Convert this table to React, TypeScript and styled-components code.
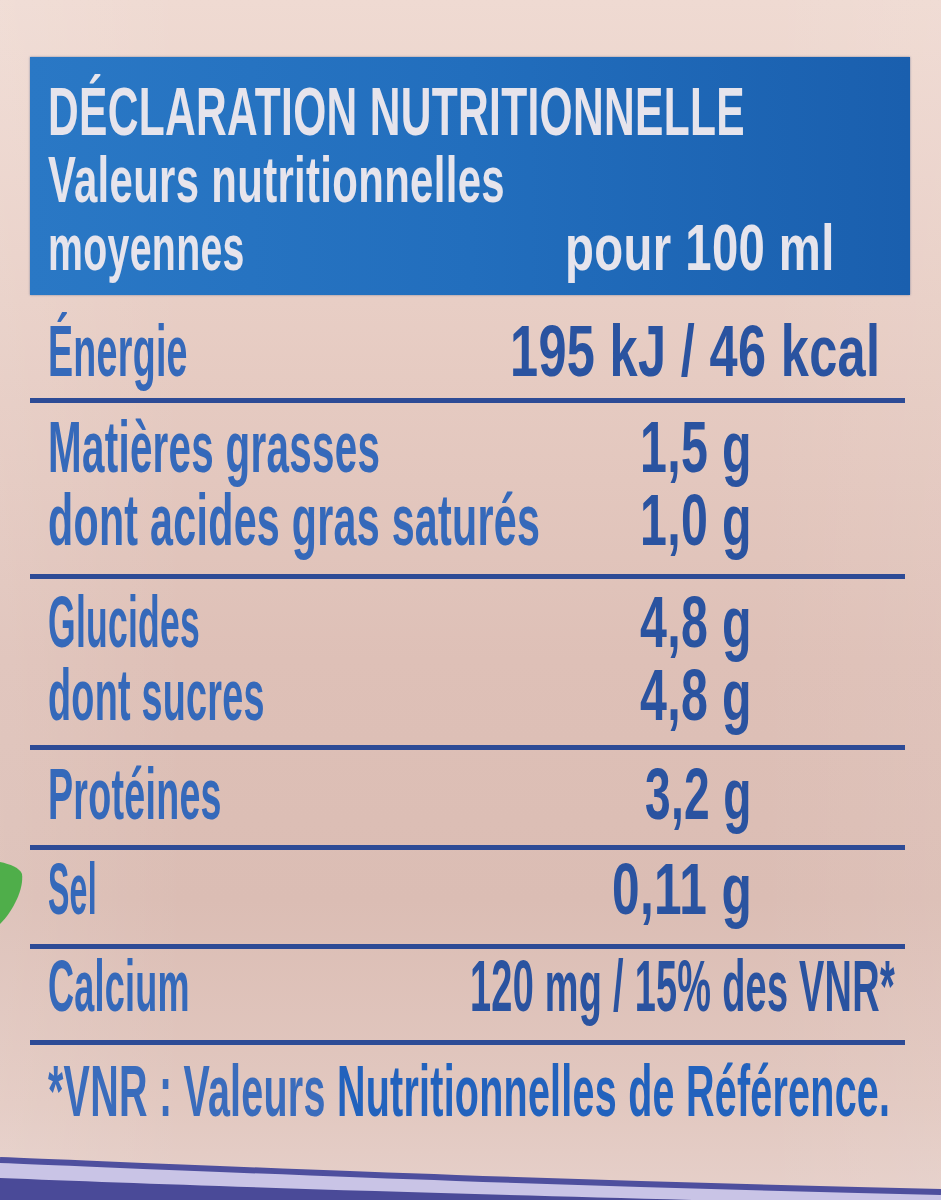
import React, { useLayoutEffect, useRef, useState } from "react";
import styled, { createGlobalStyle } from "styled-components";

const Global = createGlobalStyle`
  html, body { margin: 0; padding: 0; }
  body { font-family: "Liberation Sans", Arial, sans-serif; }
`;

const Page = styled.div`
  position: relative;
  width: 941px;
  height: 1200px;
  overflow: hidden;
  padding-top: 57px;
  box-sizing: border-box;
  background:
    linear-gradient(90deg, rgba(255,255,255,0.10) 0%, rgba(255,255,255,0) 20%, rgba(0,0,0,0) 80%, rgba(255,255,255,0.06) 100%),
    linear-gradient(180deg, #efdad2 0%, #e8cec5 25%, #dec0b7 55%, #dbbdb4 75%, #e2c8c0 92%, #e6d0ca 100%);
  font-family: "Liberation Sans", Arial, sans-serif;
  font-weight: 700;
`;

const Header = styled.div`
  margin: 0 31px 0 30px;
  padding: 19px 75px 13px 18px;
  background: linear-gradient(90deg, #2a78c5 0%, #226ebd 50%, #1a5fae 100%);
  color: #e6e4ec;
  box-shadow: 0 0 2px rgba(20, 50, 110, 0.5);
`;

const HeaderLine = styled.div<{ $size: number; $lh: number }>`
  display: flex;
  justify-content: space-between;
  align-items: baseline;
  font-size: ${(p) => p.$size}px;
  line-height: ${(p) => p.$lh}px;
  white-space: nowrap;
`;

const Table = styled.div`
  margin: 0 36px 0 30px;
`;

const Section = styled.div<{ $pt: number; $pb: number; $last?: boolean }>`
  padding: ${(p) => p.$pt}px 0 ${(p) => p.$pb}px 18px;
  border-bottom: ${(p) => (p.$last ? "none" : "5px solid #2d4b96")};
`;

const Row = styled.div<{ $inset: number }>`
  display: flex;
  justify-content: space-between;
  align-items: baseline;
  padding-right: ${(p) => p.$inset}px;
  font-size: 72px;
  line-height: 73px;
  white-space: nowrap;
`;

const Label = styled.span`
  color: #3569ba;
`;

const Value = styled.span`
  color: #2a53a0;
`;

const FootDim = styled.span`
  color: #3a6cbc;
`;

const FootBright = styled.span`
  color: #2262bd;
`;

const FitBox = styled.span<{ $w: number }>`
  display: inline-block;
  width: ${(p) => p.$w}px;
  white-space: nowrap;
  overflow: visible;
`;

const FitInner = styled.span`
  display: inline-block;
  white-space: nowrap;
  transform-origin: 0 50%;
  letter-spacing: 0.5px;
`;

const Fit: React.FC<{ w: number; children: React.ReactNode }> = ({ w, children }) => {
  const ref = useRef<HTMLSpanElement>(null);
  const [scale, setScale] = useState(0.56);
  useLayoutEffect(() => {
    const measure = () => {
      if (ref.current) {
        const n = ref.current.offsetWidth;
        if (n > 0) setScale(w / n);
      }
    };
    measure();
    if (document.fonts && document.fonts.ready) document.fonts.ready.then(measure);
  }, [w]);
  return (
    <FitBox $w={w}>
      <FitInner ref={ref} style={{ transform: `scaleX(${scale})` }}>
        {children}
      </FitInner>
    </FitBox>
  );
};

const Leaf = styled.svg`
  position: absolute;
  left: 0;
  top: 858px;
  width: 26px;
  height: 70px;
`;

const BottomBand = styled.svg`
  position: absolute;
  left: 0;
  bottom: 0;
  width: 941px;
  height: 50px;
`;

export default function App() {
  return (
    <>
      <Global />
      <Page>
        <Header>
          <HeaderLine $size={68} $lh={70}>
            <Fit w={697}>DÉCLARATION NUTRITIONNELLE</Fit>
          </HeaderLine>
          <HeaderLine $size={64} $lh={68}>
            <Fit w={457}>Valeurs nutritionnelles</Fit>
          </HeaderLine>
          <HeaderLine $size={64} $lh={68}>
            <Fit w={197}>moyennes</Fit>
            <Fit w={270}>pour 100 ml</Fit>
          </HeaderLine>
        </Header>
        <Table>
          <Section $pt={20} $pb={10}>
            <Row $inset={25}>
              <Label><Fit w={140}>Énergie</Fit></Label>
              <Value><Fit w={370}>195 kJ / 46 kcal</Fit></Value>
            </Row>
          </Section>
          <Section $pt={8} $pb={17}>
            <Row $inset={153}>
              <Label><Fit w={332}>Matières grasses</Fit></Label>
              <Value><Fit w={112}>1,5 g</Fit></Value>
            </Row>
            <Row $inset={153}>
              <Label><Fit w={492}>dont acides gras saturés</Fit></Label>
              <Value><Fit w={112}>1,0 g</Fit></Value>
            </Row>
          </Section>
          <Section $pt={7} $pb={13}>
            <Row $inset={153}>
              <Label><Fit w={152}>Glucides</Fit></Label>
              <Value><Fit w={112}>4,8 g</Fit></Value>
            </Row>
            <Row $inset={153}>
              <Label><Fit w={217}>dont sucres</Fit></Label>
              <Value><Fit w={112}>4,8 g</Fit></Value>
            </Row>
          </Section>
          <Section $pt={8} $pb={14}>
            <Row $inset={153}>
              <Label><Fit w={174}>Protéines</Fit></Label>
              <Value><Fit w={107}>3,2 g</Fit></Value>
            </Row>
          </Section>
          <Section $pt={3} $pb={18}>
            <Row $inset={153}>
              <Label><Fit w={49}>Sel</Fit></Label>
              <Value><Fit w={140}>0,11 g</Fit></Value>
            </Row>
          </Section>
          <Section $pt={1} $pb={17}>
            <Row $inset={10}>
              <Label><Fit w={142}>Calcium</Fit></Label>
              <Value><Fit w={425}>120 mg / 15% des VNR*</Fit></Value>
            </Row>
          </Section>
          <Section $pt={10} $pb={0} $last>
            <Row $inset={0}>
              <Fit w={842}>
                <FootDim>*VNR : Valeurs </FootDim>
                <FootBright>Nutritionnelles de Référence.</FootBright>
              </Fit>
            </Row>
          </Section>
        </Table>
        <Leaf viewBox="0 0 26 70">
          <path d="M0 4 C10 6 20 10 22 16 C24 30 14 52 0 66 Z" fill="#4fae4a" />
        </Leaf>
        <BottomBand viewBox="0 0 941 50" preserveAspectRatio="none">
          <path d="M0 12 C200 20 500 34 941 44 L941 50 L0 50 Z" fill="#c9c4e6" />
          <path d="M0 10 C200 18 500 32 941 42" stroke="#4e4f9e" strokeWidth="6" fill="none" />
          <path d="M0 28 C200 36 500 46 941 56 L941 50 L0 50 Z" fill="#4a4a98" />
        </BottomBand>
      </Page>
    </>
  );
}
